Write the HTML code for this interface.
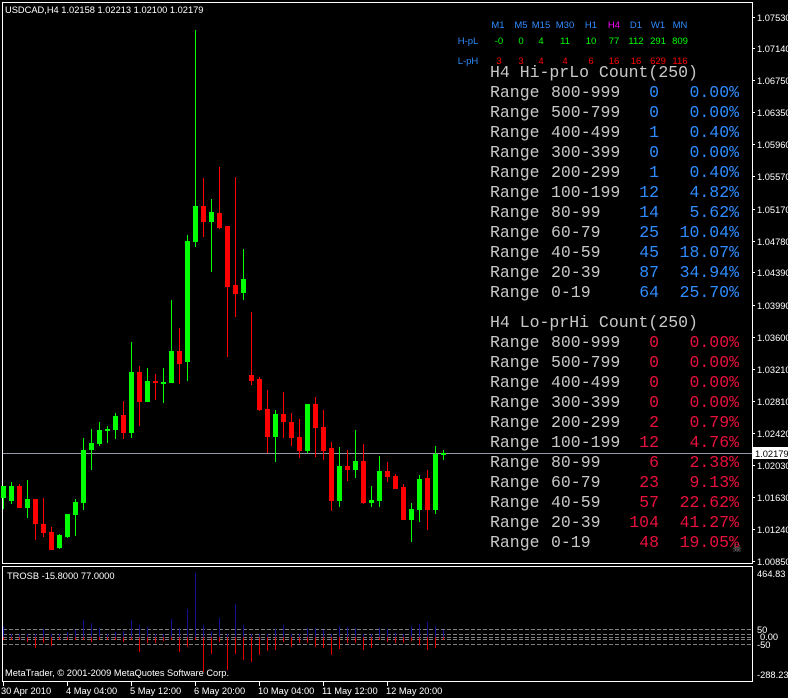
<!DOCTYPE html>
<html><head><meta charset="utf-8"><style>
html,body{margin:0;padding:0;background:#000;}
svg{display:block;}
text{font-family:"Liberation Sans",sans-serif;}
.ax,.ax text{fill:#fff;font-size:9.3px;}
.m text,text.m{font-family:"Liberation Mono",monospace;font-size:16.5px;}
.m{fill:#c8c8c8;}
.b{fill:#2f8cff;}
.h text{font-size:9.5px;text-anchor:middle;}
</style></head><body>
<svg width="788" height="698" viewBox="0 0 788 698" xmlns="http://www.w3.org/2000/svg" shape-rendering="crispEdges">
<rect width="788" height="698" fill="#000"/>
<rect x="2.5" y="2.5" width="750" height="561" fill="none" stroke="#fff"/>
<rect x="2.5" y="566.5" width="750" height="115" fill="none" stroke="#fff"/>
<line x1="3" y1="453.5" x2="752" y2="453.5" stroke="#9098a8"/>
<g fill="#00ff00">
<rect x="3" y="486" width="1" height="23"/><rect x="1" y="486" width="5" height="12"/>
<rect x="11" y="482" width="1" height="22"/><rect x="9" y="486" width="5" height="15"/>
<rect x="27" y="480" width="1" height="38"/><rect x="25" y="499" width="5" height="9"/>
<rect x="59" y="534" width="1" height="15"/><rect x="57" y="535" width="5" height="13"/>
<rect x="67" y="514" width="1" height="24"/><rect x="65" y="514" width="5" height="23"/>
<rect x="75" y="499" width="1" height="37"/><rect x="73" y="502" width="5" height="13"/>
<rect x="83" y="438" width="1" height="72"/><rect x="81" y="450" width="5" height="53"/>
<rect x="91" y="429" width="1" height="41"/><rect x="89" y="443" width="5" height="7"/>
<rect x="99" y="422" width="1" height="24"/><rect x="97" y="430" width="5" height="14"/>
<rect x="107" y="426" width="1" height="17"/><rect x="105" y="429" width="5" height="2"/>
<rect x="115" y="413" width="1" height="26"/><rect x="113" y="416" width="5" height="14"/>
<rect x="131" y="342" width="1" height="96"/><rect x="129" y="372" width="5" height="61"/>
<rect x="147" y="368" width="1" height="34"/><rect x="145" y="381" width="5" height="21"/>
<rect x="163" y="368" width="1" height="35"/><rect x="161" y="382" width="5" height="2"/>
<rect x="171" y="300" width="1" height="83"/><rect x="169" y="351" width="5" height="32"/>
<rect x="187" y="235" width="1" height="146"/><rect x="185" y="241" width="5" height="121"/>
<rect x="195" y="30" width="1" height="217"/><rect x="193" y="206" width="5" height="36"/>
<rect x="211" y="199" width="1" height="73"/><rect x="209" y="212" width="5" height="10"/>
<rect x="243" y="249" width="1" height="51"/><rect x="241" y="279" width="5" height="14"/>
<rect x="275" y="410" width="1" height="52"/><rect x="273" y="414" width="5" height="23"/>
<rect x="307" y="404" width="1" height="49"/><rect x="305" y="404" width="5" height="47"/>
<rect x="339" y="447" width="1" height="60"/><rect x="337" y="466" width="5" height="35"/>
<rect x="355" y="430" width="1" height="48"/><rect x="353" y="461" width="5" height="9"/>
<rect x="371" y="486" width="1" height="21"/><rect x="369" y="500" width="5" height="3"/>
<rect x="379" y="456" width="1" height="51"/><rect x="377" y="471" width="5" height="30"/>
<rect x="411" y="503" width="1" height="39"/><rect x="409" y="509" width="5" height="11"/>
<rect x="419" y="475" width="1" height="47"/><rect x="417" y="479" width="5" height="31"/>
<rect x="435" y="446" width="1" height="68"/><rect x="433" y="454" width="5" height="56"/>
<rect x="443" y="450" width="1" height="10"/><rect x="441" y="453" width="5" height="2"/>
</g>
<g fill="#ff0000">
<rect x="19" y="484" width="1" height="24"/><rect x="17" y="486" width="5" height="22"/>
<rect x="35" y="499" width="1" height="41"/><rect x="33" y="499" width="5" height="25"/>
<rect x="43" y="498" width="1" height="39"/><rect x="41" y="524" width="5" height="9"/>
<rect x="51" y="527" width="1" height="23"/><rect x="49" y="532" width="5" height="18"/>
<rect x="123" y="401" width="1" height="38"/><rect x="121" y="415" width="5" height="18"/>
<rect x="139" y="366" width="1" height="60"/><rect x="137" y="372" width="5" height="30"/>
<rect x="155" y="374" width="1" height="26"/><rect x="153" y="381" width="5" height="2"/>
<rect x="179" y="328" width="1" height="56"/><rect x="177" y="351" width="5" height="13"/>
<rect x="203" y="178" width="1" height="59"/><rect x="201" y="206" width="5" height="16"/>
<rect x="219" y="167" width="1" height="62"/><rect x="217" y="213" width="5" height="15"/>
<rect x="227" y="226" width="1" height="131"/><rect x="225" y="226" width="5" height="61"/>
<rect x="235" y="177" width="1" height="140"/><rect x="233" y="285" width="5" height="9"/>
<rect x="251" y="312" width="1" height="73"/><rect x="249" y="375" width="5" height="6"/>
<rect x="259" y="377" width="1" height="34"/><rect x="257" y="379" width="5" height="31"/>
<rect x="267" y="390" width="1" height="63"/><rect x="265" y="409" width="5" height="28"/>
<rect x="283" y="392" width="1" height="46"/><rect x="281" y="414" width="5" height="8"/>
<rect x="291" y="413" width="1" height="33"/><rect x="289" y="422" width="5" height="16"/>
<rect x="299" y="419" width="1" height="39"/><rect x="297" y="437" width="5" height="14"/>
<rect x="315" y="397" width="1" height="60"/><rect x="313" y="404" width="5" height="24"/>
<rect x="323" y="410" width="1" height="50"/><rect x="321" y="427" width="5" height="24"/>
<rect x="331" y="442" width="1" height="69"/><rect x="329" y="448" width="5" height="53"/>
<rect x="347" y="450" width="1" height="31"/><rect x="345" y="466" width="5" height="4"/>
<rect x="363" y="444" width="1" height="60"/><rect x="361" y="461" width="5" height="42"/>
<rect x="387" y="462" width="1" height="20"/><rect x="385" y="471" width="5" height="6"/>
<rect x="395" y="474" width="1" height="15"/><rect x="393" y="476" width="5" height="13"/>
<rect x="403" y="484" width="1" height="36"/><rect x="401" y="487" width="5" height="33"/>
<rect x="427" y="470" width="1" height="60"/><rect x="425" y="478" width="5" height="32"/>
</g>
<text x="5" y="13" class="ax">USDCAD,H4  1.02158 1.02213 1.02100 1.02179</text>
<g class="h">
<text x="498" y="28" class="b">M1</text><text x="521" y="28" class="b">M5</text><text x="541" y="28" class="b">M15</text><text x="565" y="28" class="b">M30</text><text x="591" y="28" class="b">H1</text><text x="614" y="28" fill="#ff00ff">H4</text><text x="636" y="28" class="b">D1</text><text x="658" y="28" class="b">W1</text><text x="680" y="28" class="b">MN</text>
<text x="468" y="44" class="b">H-pL</text><text x="468" y="64" class="b">L-pH</text>
<g fill="#00ff00"><text x="499" y="44">-0</text><text x="521" y="44">0</text><text x="541" y="44">4</text><text x="565" y="44">11</text><text x="591" y="44">10</text><text x="614" y="44">77</text><text x="636" y="44">112</text><text x="658" y="44">291</text><text x="680" y="44">809</text></g>
<g fill="#ff0000"><text x="499" y="64">3</text><text x="521" y="64">3</text><text x="541" y="64">4</text><text x="565" y="64">4</text><text x="591" y="64">6</text><text x="614" y="64">16</text><text x="636" y="64">16</text><text x="658" y="64">629</text><text x="680" y="64">116</text></g>
</g>
<g class="m">
<text x="490" y="77">H4 Hi-prLo Count(250)</text>
<text x="490" y="97">Range</text><text x="551" y="97">800-999</text>
<text x="490" y="117">Range</text><text x="551" y="117">500-799</text>
<text x="490" y="137">Range</text><text x="551" y="137">400-499</text>
<text x="490" y="157">Range</text><text x="551" y="157">300-399</text>
<text x="490" y="177">Range</text><text x="551" y="177">200-299</text>
<text x="490" y="197">Range</text><text x="551" y="197">100-199</text>
<text x="490" y="217">Range</text><text x="551" y="217">80-99</text>
<text x="490" y="237">Range</text><text x="551" y="237">60-79</text>
<text x="490" y="257">Range</text><text x="551" y="257">40-59</text>
<text x="490" y="277">Range</text><text x="551" y="277">20-39</text>
<text x="490" y="297">Range</text><text x="551" y="297">0-19</text>
<text x="490" y="327">H4 Lo-prHi Count(250)</text>
<text x="490" y="347">Range</text><text x="551" y="347">800-999</text>
<text x="490" y="367">Range</text><text x="551" y="367">500-799</text>
<text x="490" y="387">Range</text><text x="551" y="387">400-499</text>
<text x="490" y="407">Range</text><text x="551" y="407">300-399</text>
<text x="490" y="427">Range</text><text x="551" y="427">200-299</text>
<text x="490" y="447">Range</text><text x="551" y="447">100-199</text>
<text x="490" y="467">Range</text><text x="551" y="467">80-99</text>
<text x="490" y="487">Range</text><text x="551" y="487">60-79</text>
<text x="490" y="507">Range</text><text x="551" y="507">40-59</text>
<text x="490" y="527">Range</text><text x="551" y="527">20-39</text>
<text x="490" y="547">Range</text><text x="551" y="547">0-19</text>
</g>
<g class="m" style="fill:#2f8cff" text-anchor="end">
<text x="659" y="97">0</text><text x="739" y="97">0.00%</text>
<text x="659" y="117">0</text><text x="739" y="117">0.00%</text>
<text x="659" y="137">1</text><text x="739" y="137">0.40%</text>
<text x="659" y="157">0</text><text x="739" y="157">0.00%</text>
<text x="659" y="177">1</text><text x="739" y="177">0.40%</text>
<text x="659" y="197">12</text><text x="739" y="197">4.82%</text>
<text x="659" y="217">14</text><text x="739" y="217">5.62%</text>
<text x="659" y="237">25</text><text x="739" y="237">10.04%</text>
<text x="659" y="257">45</text><text x="739" y="257">18.07%</text>
<text x="659" y="277">87</text><text x="739" y="277">34.94%</text>
<text x="659" y="297">64</text><text x="739" y="297">25.70%</text>
</g>
<g class="m" style="fill:#e8103c" text-anchor="end">
<text x="659" y="347">0</text><text x="739" y="347">0.00%</text>
<text x="659" y="367">0</text><text x="739" y="367">0.00%</text>
<text x="659" y="387">0</text><text x="739" y="387">0.00%</text>
<text x="659" y="407">0</text><text x="739" y="407">0.00%</text>
<text x="659" y="427">2</text><text x="739" y="427">0.79%</text>
<text x="659" y="447">12</text><text x="739" y="447">4.76%</text>
<text x="659" y="467">6</text><text x="739" y="467">2.38%</text>
<text x="659" y="487">23</text><text x="739" y="487">9.13%</text>
<text x="659" y="507">57</text><text x="739" y="507">22.62%</text>
<text x="659" y="527">104</text><text x="739" y="527">41.27%</text>
<text x="659" y="547">48</text><text x="739" y="547">19.05%</text>
</g>
<text x="732" y="552" fill="#909090" font-size="11">☠</text>
<g fill="#fff">
<rect x="752" y="17" width="3" height="1"/><rect x="752" y="48" width="3" height="1"/><rect x="752" y="80" width="3" height="1"/><rect x="752" y="112" width="3" height="1"/><rect x="752" y="144" width="3" height="1"/><rect x="752" y="176" width="3" height="1"/><rect x="752" y="209" width="3" height="1"/><rect x="752" y="241" width="3" height="1"/><rect x="752" y="272" width="3" height="1"/><rect x="752" y="305" width="3" height="1"/><rect x="752" y="337" width="3" height="1"/><rect x="752" y="369" width="3" height="1"/><rect x="752" y="401" width="3" height="1"/><rect x="752" y="433" width="3" height="1"/><rect x="752" y="465" width="3" height="1"/><rect x="752" y="497" width="3" height="1"/><rect x="752" y="529" width="3" height="1"/><rect x="752" y="561" width="3" height="1"/>
</g>
<g class="ax">
<text x="757" y="21">1.07530</text><text x="757" y="52">1.07140</text><text x="757" y="84">1.06750</text><text x="757" y="116">1.06350</text><text x="757" y="148">1.05960</text><text x="757" y="180">1.05570</text><text x="757" y="213">1.05170</text><text x="757" y="245">1.04780</text><text x="757" y="276">1.04390</text><text x="757" y="309">1.03990</text><text x="757" y="341">1.03600</text><text x="757" y="373">1.03210</text><text x="757" y="405">1.02810</text><text x="757" y="437">1.02420</text><text x="757" y="469">1.02030</text><text x="757" y="501">1.01630</text><text x="757" y="533">1.01240</text><text x="757" y="565">1.00850</text>
</g>
<rect x="753" y="447" width="35" height="12" fill="#fff"/>
<text x="755" y="457" font-size="9.3" fill="#000">1.02179</text>
<text x="7" y="579" class="ax">TROSB -15.8000 77.0000</text>
<g stroke="#808080" stroke-dasharray="4,2">
<line x1="3" y1="629.5" x2="752" y2="629.5"/><line x1="3" y1="634.5" x2="752" y2="634.5"/><line x1="3" y1="637.5" x2="752" y2="637.5"/><line x1="3" y1="639.5" x2="752" y2="639.5"/><line x1="3" y1="644.5" x2="752" y2="644.5"/>
</g>
<g fill="#101090">
<rect x="3" y="626" width="1" height="11"/><rect x="11" y="634" width="1" height="3"/><rect x="19" y="634" width="1" height="3"/><rect x="27" y="634" width="1" height="3"/><rect x="35" y="634" width="1" height="3"/><rect x="43" y="629" width="1" height="8"/><rect x="51" y="634" width="1" height="3"/><rect x="59" y="634" width="1" height="3"/><rect x="67" y="632" width="1" height="5"/><rect x="75" y="630" width="1" height="7"/><rect x="83" y="620" width="1" height="17"/><rect x="91" y="623" width="1" height="14"/><rect x="99" y="628" width="1" height="9"/><rect x="107" y="634" width="1" height="3"/><rect x="115" y="632" width="1" height="5"/><rect x="123" y="631" width="1" height="6"/><rect x="131" y="620" width="1" height="17"/><rect x="139" y="625" width="1" height="12"/><rect x="147" y="627" width="1" height="10"/><rect x="155" y="634" width="1" height="3"/><rect x="163" y="634" width="1" height="3"/><rect x="171" y="619" width="1" height="18"/><rect x="179" y="628" width="1" height="9"/><rect x="187" y="609" width="1" height="28"/><rect x="195" y="573" width="1" height="64"/><rect x="203" y="625" width="1" height="12"/><rect x="211" y="631" width="1" height="6"/><rect x="219" y="618" width="1" height="19"/><rect x="227" y="634" width="1" height="3"/><rect x="235" y="604" width="1" height="33"/><rect x="243" y="625" width="1" height="12"/><rect x="251" y="634" width="1" height="3"/><rect x="259" y="634" width="1" height="3"/><rect x="267" y="634" width="1" height="3"/><rect x="275" y="629" width="1" height="8"/><rect x="283" y="625" width="1" height="12"/><rect x="291" y="634" width="1" height="3"/><rect x="299" y="634" width="1" height="3"/><rect x="307" y="628" width="1" height="9"/><rect x="315" y="628" width="1" height="9"/><rect x="323" y="630" width="1" height="7"/><rect x="331" y="634" width="1" height="3"/><rect x="339" y="626" width="1" height="11"/><rect x="347" y="627" width="1" height="10"/><rect x="355" y="628" width="1" height="9"/><rect x="363" y="634" width="1" height="3"/><rect x="371" y="634" width="1" height="3"/><rect x="379" y="628" width="1" height="9"/><rect x="387" y="629" width="1" height="8"/><rect x="395" y="633" width="1" height="4"/><rect x="403" y="634" width="1" height="3"/><rect x="411" y="626" width="1" height="11"/><rect x="419" y="624" width="1" height="13"/><rect x="427" y="622" width="1" height="15"/><rect x="435" y="626" width="1" height="11"/><rect x="443" y="630" width="1" height="7"/>
</g>
<g fill="#e00000">
<rect x="3" y="637" width="1" height="3"/><rect x="11" y="637" width="1" height="3"/><rect x="19" y="637" width="1" height="3"/><rect x="27" y="637" width="1" height="5"/><rect x="35" y="637" width="1" height="11"/><rect x="43" y="637" width="1" height="6"/><rect x="51" y="637" width="1" height="9"/><rect x="59" y="637" width="1" height="3"/><rect x="67" y="637" width="1" height="3"/><rect x="75" y="637" width="1" height="3"/><rect x="83" y="637" width="1" height="3"/><rect x="91" y="637" width="1" height="5"/><rect x="99" y="637" width="1" height="3"/><rect x="107" y="637" width="1" height="3"/><rect x="115" y="637" width="1" height="3"/><rect x="123" y="637" width="1" height="5"/><rect x="131" y="637" width="1" height="3"/><rect x="139" y="637" width="1" height="15"/><rect x="147" y="637" width="1" height="6"/><rect x="155" y="637" width="1" height="6"/><rect x="163" y="637" width="1" height="4"/><rect x="171" y="637" width="1" height="3"/><rect x="179" y="637" width="1" height="15"/><rect x="187" y="637" width="1" height="10"/><rect x="195" y="637" width="1" height="3"/><rect x="203" y="637" width="1" height="35"/><rect x="211" y="637" width="1" height="17"/><rect x="219" y="637" width="1" height="5"/><rect x="227" y="637" width="1" height="33"/><rect x="235" y="637" width="1" height="17"/><rect x="243" y="637" width="1" height="23"/><rect x="251" y="637" width="1" height="25"/><rect x="259" y="637" width="1" height="18"/><rect x="267" y="637" width="1" height="14"/><rect x="275" y="637" width="1" height="13"/><rect x="283" y="637" width="1" height="5"/><rect x="291" y="637" width="1" height="10"/><rect x="299" y="637" width="1" height="6"/><rect x="307" y="637" width="1" height="6"/><rect x="315" y="637" width="1" height="10"/><rect x="323" y="637" width="1" height="11"/><rect x="331" y="637" width="1" height="18"/><rect x="339" y="637" width="1" height="12"/><rect x="347" y="637" width="1" height="6"/><rect x="355" y="637" width="1" height="6"/><rect x="363" y="637" width="1" height="13"/><rect x="371" y="637" width="1" height="11"/><rect x="379" y="637" width="1" height="3"/><rect x="387" y="637" width="1" height="5"/><rect x="395" y="637" width="1" height="6"/><rect x="403" y="637" width="1" height="6"/><rect x="411" y="637" width="1" height="4"/><rect x="419" y="637" width="1" height="8"/><rect x="427" y="637" width="1" height="13"/><rect x="435" y="637" width="1" height="11"/><rect x="443" y="637" width="1" height="3"/>
</g>
<text x="5" y="676" class="ax">MetaTrader, © 2001-2009 MetaQuotes Software Corp.</text>
<g class="ax">
<text x="757" y="577">464.83</text>
<text x="757" y="633">50</text>
<text x="760" y="640">0.00</text>
<text x="757" y="648">-50</text>
<text x="757" y="678">-288.23</text>
</g>
<g fill="#fff">
<rect x="3" y="682" width="1" height="4"/><rect x="67" y="682" width="1" height="4"/><rect x="131" y="682" width="1" height="4"/><rect x="195" y="682" width="1" height="4"/><rect x="259" y="682" width="1" height="4"/><rect x="323" y="682" width="1" height="4"/><rect x="387" y="682" width="1" height="4"/>
</g>
<g class="ax">
<text x="1" y="694">30 Apr 2010</text><text x="66" y="694">4 May 04:00</text><text x="130" y="694">5 May 12:00</text><text x="194" y="694">6 May 20:00</text><text x="258" y="694">10 May 04:00</text><text x="322" y="694">11 May 12:00</text><text x="386" y="694">12 May 20:00</text>
</g>
</svg>
</body></html>
